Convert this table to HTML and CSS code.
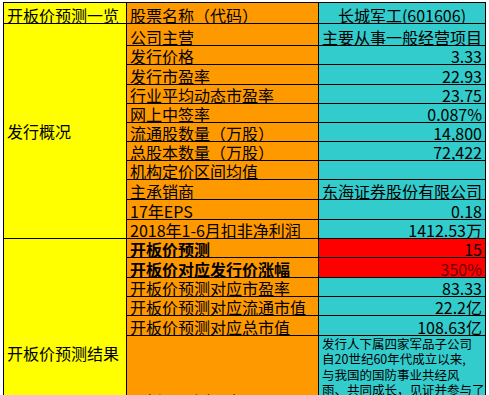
FILE: index.html
```html
<!DOCTYPE html>
<html lang="zh-CN">
<head>
<meta charset="utf-8">
<title>开板价预测一览</title>
<link rel="stylesheet" href="styles.css">
</head>
<body>
<div class="sheet">
  <div class="c y">开板价预测一览</div>
  <div class="c o">股票名称（代码）</div>
  <div class="c t ctr">长城军工(601606)</div>

  <div class="c y mid span11">发行概况</div>
  <div class="c o">公司主营</div>
  <div class="c t ctr">主要从事一般经营项目</div>

  <div class="c o">发行价格</div>
  <div class="c t num">3.33</div>
  <div class="c o">发行市盈率</div>
  <div class="c t num">22.93</div>
  <div class="c o">行业平均动态市盈率</div>
  <div class="c t num">23.75</div>
  <div class="c o">网上中签率</div>
  <div class="c t num">0.087%</div>
  <div class="c o">流通股数量（万股）</div>
  <div class="c t num">14,800</div>
  <div class="c o">总股本数量（万股）</div>
  <div class="c t num">72,422</div>
  <div class="c o">机构定价区间均值</div>
  <div class="c t num"></div>
  <div class="c o">主承销商</div>
  <div class="c t ctr">东海证券股份有限公司</div>
  <div class="c o">17年EPS</div>
  <div class="c t num">0.18</div>
  <div class="c o">2018年1-6月扣非净利润</div>
  <div class="c t num">1412.53万</div>

  <div class="c y mid span6">开板价预测结果</div>
  <div class="c o b">开板价预测</div>
  <div class="c r num">15</div>
  <div class="c o b">开板价对应发行价涨幅</div>
  <div class="c r num dark">350%</div>
  <div class="c o">开板价预测对应市盈率</div>
  <div class="c t num">83.33</div>
  <div class="c o">开板价预测对应流通市值</div>
  <div class="c t num">22.2亿</div>
  <div class="c o">开板价预测对应总市值</div>
  <div class="c t num">108.63亿</div>
  <div class="c o mid">开板价预测理由</div>
  <div class="c t note">发行人下属四家军品子公司<br>自20世纪60年代成立以来,<br>与我国的国防事业共经风<br>雨、共同成长，见证并参与了<br>我国国防工业的发展历程，<br>是国内重要的军品生产企业<br>之一。</div>
</div>
</body>
</html>
```

FILE: styles.css
```css
html, body {
  margin: 0;
  padding: 0;
  background: #ffffff;
  overflow: hidden;
}

body {
  font-family: "Noto Sans CJK SC", "Noto Sans", sans-serif;
  color: #000000;
}

.sheet {
  display: grid;
  grid-template-columns: 122px 191px 166px;
  grid-template-rows: 20px 21px 18px 19px 18px 18px 18px 18px 18px 19px 19px 18px 18px 19px 18px 18px 19px 130px;
  gap: 1px;
  padding: 1px;
  background: #000000;
  width: max-content;
  margin: 2px 0 0 3px;
}

.c {
  display: flex;
  align-items: flex-end;
  padding: 0 3px;
  font-size: 16px;
  line-height: 16px;
  white-space: nowrap;
  overflow: hidden;
}

.y { background: #ffff00; }
.o { background: #ff9900; }
.t { background: #33cccc; }
.r { background: #ff0000; }

.num { justify-content: flex-end; }
.ctr { justify-content: center; }
.mid { align-items: center; }
.b { font-weight: 700; }
.dark { color: #6a0000; }

.span11 { grid-row: span 11; }
.span6 { grid-row: span 6; }

.note {
  display: block;
  white-space: nowrap;
  font-size: 12.5px;
  line-height: 15.4px;
  padding: 0 2px 0 3px;
}
```
